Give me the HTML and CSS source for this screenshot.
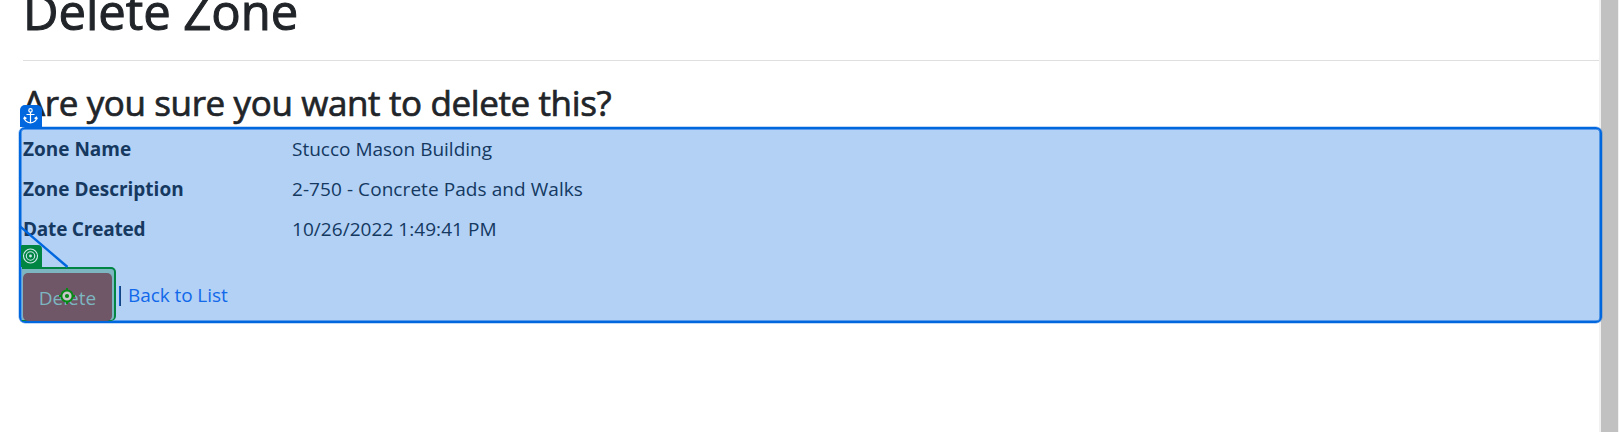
FILE: index.html
```html
<!DOCTYPE html>
<html lang="en">
<head>
<meta charset="utf-8">
<title>Delete Zone</title>
<link rel="stylesheet" href="styles.css">
</head>
<body>
<div class="page">
  <main class="content">
    <h1 class="title">Delete Zone</h1>
    <hr class="rule">
    <h3 class="question">Are you sure you want to delete this?</h3>
    <dl class="details">
      <dt>Zone Name</dt><dd>Stucco Mason Building</dd>
      <dt>Zone Description</dt><dd class="walks">2-750 - Concrete Pads and Walks</dd>
      <dt class="created">Date Created</dt><dd class="date">10/26/2022 1:49:41 PM</dd>
    </dl>
    <form class="actions">
      <button class="delete" type="button">Delete</button>
      <span class="pipe"></span>
      <a class="back">Back to List</a>
    </form>
  </main>
  <div class="scrollbar"></div>
</div>
<div class="anchor-box"></div>
<div class="target-box"></div>
<div class="tag anchor-tag">
  <svg width="22" height="22" viewBox="0 0 22 22" fill="none" stroke="#fff" stroke-width="1.2"><circle cx="10.5" cy="5.4" r="1.7"/><path d="M10.5 7.1V18M6.5 9.5h8M4.3 12.3c.2 3.4 2.8 5.2 6.2 5.7 3.4-.5 6-2.3 6.2-5.7M3.7 14.3l.8-2.2 2 1.5M17.3 14.3l-.8-2.2-2 1.5"/></svg>
</div>
<div class="tag target-tag">
  <svg width="20" height="22" viewBox="0 0 20 22" fill="none" stroke="#cfe8ec" stroke-width="1.1"><circle cx="9.5" cy="11" r="7"/><circle cx="9.5" cy="11" r="4.2"/><circle cx="9.5" cy="11" r="1.4" fill="#cfe8ec" stroke="none"/></svg>
</div>
<svg class="connector" width="50" height="44" viewBox="0 0 50 44" fill="none"><path d="M0 .5L48.5 42" stroke="#0067df" stroke-width="2.4"/></svg>
<svg class="pointer" width="18" height="18" viewBox="0 0 18 18" fill="none"><path d="M9 1v3M9 14v3M1 9h3M14 9h3" stroke="#078a16" stroke-width="2"/><circle cx="9" cy="9" r="5.6" fill="#c9c4c9" stroke="#078a16" stroke-width="2"/><circle cx="9" cy="9" r="2.1" fill="#078a16"/></svg>
</body>
</html>
```
FILE: styles.css
```css
* { box-sizing: border-box; }
body { margin: 0; background: #fff; color: #212529; font: 19px/30px "Open Sans", "Noto Sans", sans-serif; overflow: hidden; }
.page { display: flex; height: 432px; }
.content { width: 1599px; flex: none; padding-left: 23px; white-space: nowrap; }
.title { margin: -19px 0 0; font-size: 49px; line-height: 60px; font-weight: 500; letter-spacing: -.05px; -webkit-text-stroke: 1px #212529; }
.rule { height: 1px; margin: 19px 0 19px; border: 0; background: #dedfe0; }
.question { margin: 0; font-size: 35px; line-height: 46px; font-weight: 500; letter-spacing: -.38px; -webkit-text-stroke: .7px #212529; }
.details { display: grid; grid-template-columns: 269px 1fr; row-gap: 10px; margin: 8px 0 0; }
.details dt { font-weight: 700; }
.details dd { margin: 0; font-weight: 400; }
.details .walks { letter-spacing: .07px; }
.details .created { letter-spacing: -.22px; }
.details .date { letter-spacing: .05px; }
.actions { display: flex; margin: 29px 0 0; height: 48px; }
.delete { position: relative; z-index: 4; width: 89px; height: 48px; margin: 0 1px 0 0; padding: 2px 0 0; border: 0; border-radius: 5px; background: #6f5767; color: #7db5c0; font: inherit; }
.pipe { width: 2px; height: 20px; margin: 13px 7px 0 6px; background: linear-gradient(90deg, #0d6efd, #212529); }
.back { color: #1a69f0; margin-top: 7px; letter-spacing: -.08px; }
.scrollbar { width: 20px; background: #c1c1c1; border: solid #f1f1f1; border-width: 0 1px 0 2px; }
.anchor-box { position: absolute; z-index: 2; left: 19px; top: 127px; width: 1583px; height: 196px; border: 2px solid #0067df; border-radius: 6px; background: rgba(0, 103, 223, .3); background-clip: padding-box; box-shadow: inset 0 0 0 .5px #0067df, 0 0 0 .5px rgba(0, 103, 223, .5); }
.target-box { position: absolute; z-index: 3; left: 22px; top: 267px; width: 94px; height: 54px; border: solid #008542; border-width: 2px 2px 1px 0; border-radius: 0 5px 5px 0; background: #7db5c0; }
.tag { position: absolute; z-index: 4; display: flex; }
.anchor-tag { left: 20px; top: 105px; width: 22px; height: 22px; background: #0067df; border-radius: 5px 5px 0 0; }
.target-tag { left: 21px; top: 245px; width: 21px; height: 22px; background: #008542; border-radius: 1px 4px 0 0; }
.connector { position: absolute; z-index: 5; left: 19px; top: 225px; }
.pointer { position: absolute; z-index: 5; left: 58px; top: 287px; }
```
